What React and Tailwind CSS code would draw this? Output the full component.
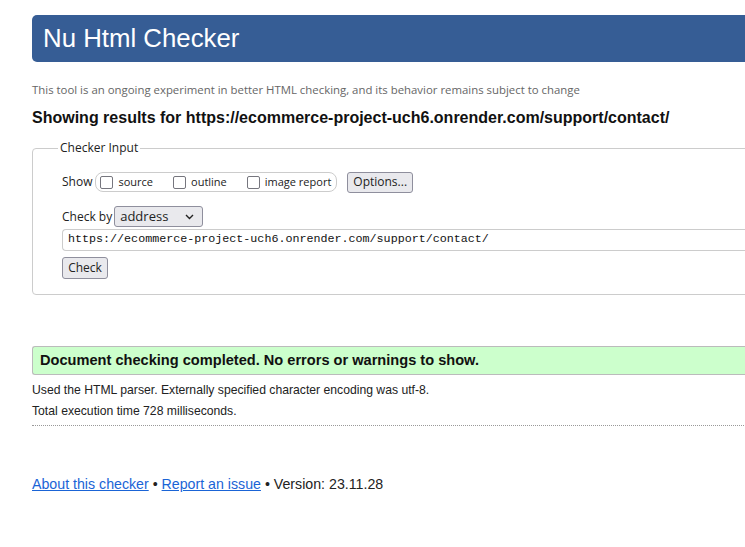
export default function App() {
  const ui = { fontFamily: '"Open Sans", "Noto Sans", sans-serif' };
  const arial = { fontFamily: '"Liberation Sans", Arial, sans-serif' };
  const mono = { fontFamily: '"Liberation Mono", "DejaVu Sans Mono", monospace' };

  const opts = ['source', 'outline', 'image report'];

  return (
    <div className="w-[745px] h-[547px] overflow-hidden bg-white text-[#222]" style={arial}>
      <div className="w-[1000px] pl-[32px] pt-[15px]">
        <div className="h-[47px] rounded-[5px] bg-[#365d95] pl-[11px] flex items-center">
          <h1 className="text-[25.8px] leading-none text-white mt-[1px]" style={arial}>Nu Html Checker</h1>
        </div>

        <p className="mt-[21px] text-[11.4px] leading-[14px] text-[#666]" style={ui}>
          This tool is an ongoing experiment in better HTML checking, and its behavior remains subject to change
        </p>

        <h2 className="mt-[11px] text-[16px] leading-[20px] font-bold text-[#111]">
          Showing results for https://ecommerce-project-uch6.onrender.com/support/contact/
        </h2>

        <fieldset className="mt-[12px] border border-[#ccc] rounded-[4px] pl-[29px] pb-[15px] text-[12px]" style={ui}>
          <legend className="ml-[-4px] px-[2px] text-[12px] leading-[16px] text-[#222]">Checker Input</legend>

          <div className="mt-[15px] flex items-center h-[22px]">
            <span className="text-[12px] mr-[3px]">Show</span>
            <div className="flex items-center h-[20px] border border-[#ccc] rounded-[8px] pl-[4px] pr-[5px]">
              {opts.map((o, i) => (
                <label key={o} className={`flex items-center ${i > 0 ? 'ml-[20px]' : ''}`}>
                  <span className="w-[13px] h-[13px] border-[1.6px] border-[#76767e] rounded-[2px] bg-white"></span>
                  <span className="ml-[5px] text-[11px]">{o}</span>
                </label>
              ))}
            </div>
            <button className="ml-[10px] h-[21px] px-[5px] border border-[#8f8f9d] rounded-[3px] bg-[#e9e9ed] text-[12px] leading-none">
              Options...
            </button>
          </div>

          <div className="mt-[13px] flex items-center h-[21px]">
            <span className="text-[12px] mr-[2px]">Check by</span>
            <div className="w-[89px] h-[21px] border border-[#8f8f9d] rounded-[3px] bg-[#e9e9ed] flex items-center justify-between pl-[5px] pr-[8px]">
              <span className="text-[13px] leading-none">address</span>
              <svg width="9" height="6" viewBox="0 0 9 6" fill="none">
                <path d="M1 1l3.5 3.5L8 1" stroke="#222" strokeWidth="1.4" />
              </svg>
            </div>
          </div>

          <div className="mt-[2px] h-[22px] border border-r-0 border-[#ccc] rounded-l-[4px] flex items-center pl-[5px]">
            <span className="text-[11.7px] leading-none text-[#111]" style={mono}>
              https://ecommerce-project-uch6.onrender.com/support/contact/
            </span>
          </div>

          <button className="mt-[6px] h-[22px] w-[46px] border border-[#8f8f9d] rounded-[3px] bg-[#e9e9ed] text-[12px] leading-none flex items-center justify-center">
            Check
          </button>
        </fieldset>

        <div className="mt-[51px] h-[29px] border border-r-0 border-[#bbb] rounded-l-[3px] bg-[#ccffcc] flex items-center pl-[7px]">
          <span className="text-[14.6px] font-bold text-[#111]">
            Document checking completed. No errors or warnings to show.
          </span>
        </div>

        <p className="mt-[8px] text-[12.2px] leading-[14px]">
          Used the HTML parser. Externally specified character encoding was utf-8.
        </p>
        <p className="mt-[7px] text-[12.2px] leading-[14px]">Total execution time 728 milliseconds.</p>
        <div className="mt-[7px] border-t border-dotted border-[#999]"></div>

        <p className="mt-[49px] text-[14.2px] leading-[18px]">
          <a href="#" className="text-[#1a64d6] underline">About this checker</a>
          {' • '}
          <a href="#" className="text-[#1a64d6] underline">Report an issue</a>
          {' • Version: 23.11.28'}
        </p>
      </div>
    </div>
  );
}
